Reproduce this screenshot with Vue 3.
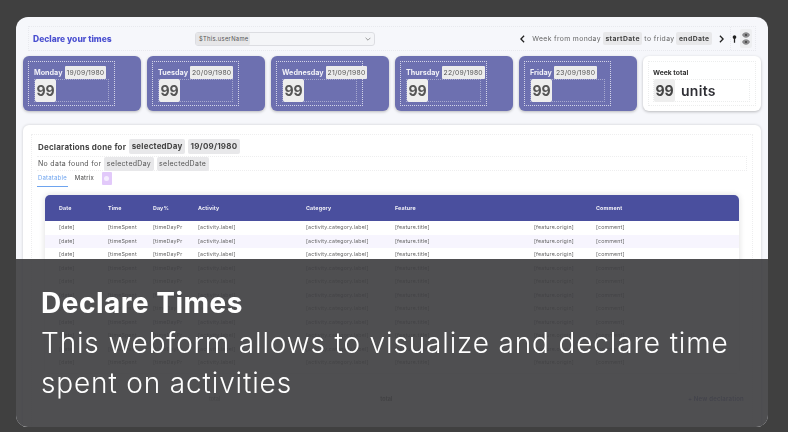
<template>
  <main class="stage">
    <section class="shot">
      <div class="page">
        <header class="top">
          <h1 class="top-title">Declare your times</h1>
          <div class="select">
            <span class="select-value">$This.userName</span>
            <svg class="select-arrow" viewBox="0 0 10 6"><path d="M1 1l4 4 4-4" /></svg>
          </div>
          <div class="week">
            <svg class="chev" viewBox="0 0 6 10"><path d="M5 1L1 5l4 4" /></svg>
            <span>Week from monday</span>
            <b class="pill">startDate</b>
            <span>to friday</span>
            <b class="pill">endDate</b>
            <svg class="chev" viewBox="0 0 6 10"><path d="M1 1l4 4-4 4" /></svg>
          </div>
          <div class="tools">
            <svg class="pin" viewBox="0 0 8 12"><path d="M4 0a3 3 0 0 1 1 5.8V12H3V5.800A3 3 0 0 1 4 0z" /></svg>
            <div class="eyes">
              <svg v-for="n in 2" :key="n" viewBox="0 0 12 8">
                <path d="M6 0C3.400 0 1.300 1.600 0 4c1.300 2.400 3.400 4 6 4s4.700-1.600 6-4C10.700 1.600 8.600 0 6 0z" />
                <circle cx="6" cy="4" r="1.500" />
              </svg>
            </div>
          </div>
        </header>

        <div class="cards">
          <article v-for="day in days" :key="day.name" class="card">
            <div class="card-box">
              <div class="card-head">
                <span class="day-name">{{ day.name }}</span>
                <span class="day-date">{{ day.date }}</span>
              </div>
              <div class="card-value"><span class="num">99</span></div>
            </div>
          </article>
          <article class="card total">
            <div class="card-box">
              <div class="total-label">Week total</div>
              <div class="card-value">
                <span class="num">99</span>
                <span class="units">units</span>
              </div>
            </div>
          </article>
        </div>

        <section class="panel">
          <div class="panel-box">
            <h2 class="decl">
              Declarations done for
              <span class="pill">selectedDay</span>
              <span class="pill">19/09/1980</span>
            </h2>
            <p class="none">
              No data found for
              <span class="pill">selectedDay</span>
              <span class="pill">selectedDate</span>
            </p>
            <div class="tabs">
              <span class="tab active">Datatable</span>
              <span class="tab">Matrix</span>
              <span class="tab-add"><i></i></span>
            </div>
            <div class="table">
              <div class="row head">
                <span v-for="c in columns" :key="c">{{ c }}</span>
              </div>
              <div v-for="n in 11" :key="n" class="row">
                <span v-for="c in cells" :key="c">{{ c }}</span>
              </div>
            </div>
            <div class="foot">
              <span class="foot-total">total</span>
              <span class="foot-total strong">total</span>
              <span class="foot-new">+ New declaration</span>
            </div>
          </div>
        </section>
      </div>

      <div class="caption">
        <h3>Declare Times</h3>
        <p>This webform allows to visualize and declare time spent on activities</p>
      </div>
    </section>
  </main>
</template>

<script setup>
const days = [
  { name: 'Monday', date: '19/09/1980' },
  { name: 'Tuesday', date: '20/09/1980' },
  { name: 'Wednesday', date: '21/09/1980' },
  { name: 'Thursday', date: '22/09/1980' },
  { name: 'Friday', date: '23/09/1980' }
]

const columns = ['Date', 'Time', 'Day%', 'Activity', 'Category', 'Feature', '', 'Comment']
const cells = [
  '[date]',
  '[timeSpent',
  '[timeDayPr',
  '[activity.label]',
  '[activity.category.label]',
  '[feature.title]',
  '[feature.origin]',
  '[comment]'
]
</script>

<style>
html,
body {
  margin: 0;
  background: #404040;
}
</style>

<style scoped>
.stage {
  width: 788px;
  height: 432px;
  padding: 17px 20px 5px 16px;
  box-sizing: border-box;
  background: #404040;
  font-family: Inter, "Liberation Sans", sans-serif;
  overflow: hidden;
}

.shot {
  position: relative;
  height: 410px;
  border-radius: 12px;
  overflow: hidden;
  background: #f6f7fb;
}

.page {
  padding: 9px 7px 0;
  color: #333;
  filter: blur(0.35px);
}

.top {
  position: relative;
  display: grid;
  grid-template-columns: 350px 1fr 25px;
  align-items: center;
  height: 25px;
  margin: 0 5px;
  border: 1px dotted #e8e9ee;
  box-sizing: border-box;
}

.top-title {
  margin: 0 0 0 4px;
  font-size: 8.500px;
  font-weight: 800;
  color: #4a4fd0;
  white-space: nowrap;
}

.select {
  position: absolute;
  left: 166px;
  top: 5px;
  width: 180px;
  height: 14px;
  display: flex;
  align-items: center;
  justify-content: space-between;
  box-sizing: border-box;
  border: 1px solid #dcdde2;
  border-radius: 3px;
  background: #f4f5f8;
}

.select-value {
  padding: 0 2px 0 3px;
  height: 12px;
  line-height: 12px;
  font-size: 5.800px;
  letter-spacing: 0.3px;
  background: #e6e6e8;
  border-radius: 2px;
  color: #555;
}

.select-arrow {
  width: 6px;
  height: 4px;
  margin-right: 3px;
  fill: none;
  stroke: #777;
  stroke-width: 1.200;
}

.week {
  grid-column: 2;
  display: flex;
  align-items: center;
  justify-content: flex-end;
  gap: 2px;
  font-size: 6.800px;
  letter-spacing: 0.38px;
  color: #666;
  white-space: nowrap;
  padding-right: 1px;
}

.chev {
  width: 5px;
  height: 8px;
  margin: 0 5px;
  fill: none;
  stroke: #222;
  stroke-width: 1.600;
}

.tools {
  grid-column: 3;
  display: flex;
  align-items: center;
  gap: 3px;
  height: 100%;
  border-left: 1px dotted #e8e9ee;
  padding-left: 1px;
}

.pin {
  width: 5px;
  height: 8px;
  fill: #222;
}

.eyes {
  display: flex;
  flex-direction: column;
  justify-content: center;
  align-items: center;
  gap: 1px;
  width: 12px;
  height: 19px;
  background: #eeeff1;
  border-radius: 2px;
}

.eyes svg {
  width: 8px;
  height: 6px;
  fill: #8a8a8c;
}

.eyes circle {
  fill: #3a3a3a;
}

.pill {
  display: inline-block;
  padding: 0 2.500px;
  background: #e8e8ea;
  border-radius: 2px;
}

.week .pill {
  line-height: 13px;
  color: #444;
  font-weight: 700;
}

.cards {
  display: grid;
  grid-template-columns: repeat(6, 1fr);
  gap: 6px;
  margin-top: 5px;
}

.card {
  height: 55px;
  padding: 5px;
  box-sizing: border-box;
  border-radius: 6px;
  background: #6d70b0;
  box-shadow: 0 1px 3px rgba(0, 0, 0, 0.25);
}

.card-box {
  width: 87px;
  height: 45px;
  padding: 4px 5px 0;
  box-sizing: border-box;
  border: 1px dotted rgba(255, 255, 255, 0.7);
}

.card-head {
  display: flex;
  align-items: center;
  gap: 2px;
  height: 13px;
  white-space: nowrap;
}

.day-name {
  font-size: 7.200px;
  font-weight: 700;
  color: #f2f2f8;
}

.day-date {
  padding: 0 2px;
  line-height: 13px;
  font-size: 6.800px;
  letter-spacing: 0.2px;
  color: #555;
  background: #ececec;
  border-radius: 1px;
}

.card-value {
  display: flex;
  align-items: center;
  height: 23px;
  width: 75px;
  border: 1px dotted rgba(255, 255, 255, 0.4);
  box-sizing: border-box;
}

.num {
  display: block;
  width: 21px;
  height: 23px;
  line-height: 23px;
  text-align: center;
  font-size: 14px;
  font-weight: 700;
  color: #555;
  background: #eeeeee;
  border-radius: 2px;
}

.total {
  background: #fff;
}

.total .card-box {
  width: 108px;
  padding-left: 4px;
  border-color: #eceded;
}

.total-label {
  height: 13px;
  line-height: 13px;
  font-size: 6.800px;
  font-weight: 700;
  color: #333;
}

.total .card-value {
  width: 97px;
  border-color: #eceded;
}

.total .num {
  color: #444;
  background: #eee;
}

.units {
  margin-left: 6px;
  font-size: 14px;
  font-weight: 600;
  letter-spacing: 0.3px;
  color: #2f2f35;
}

.panel {
  margin-top: 14px;
  padding: 9px 8px;
  height: 320px;
  box-sizing: border-box;
  border-radius: 6px;
  background: #fff;
  box-shadow: 0 0 3px rgba(0, 0, 0, 0.18);
}

.panel-box {
  height: 100%;
  box-sizing: border-box;
  border: 1px dotted #eeeeef;
  padding: 4px 5px 0;
}

.decl {
  display: flex;
  align-items: center;
  gap: 2px;
  height: 15px;
  margin: 0 0 0 1px;
  font-size: 8px;
  font-weight: 700;
  letter-spacing: 0.2px;
  color: #444;
}

.decl .pill {
  line-height: 15px;
  margin-left: 1px;
}

.none {
  display: flex;
  align-items: center;
  gap: 2px;
  height: 15px;
  margin: 2px 0 0;
  padding-left: 1px;
  box-sizing: border-box;
  border: 1px dotted #eeeeef;
  border-width: 1px 1px 1px 0;
  font-size: 7px;
  letter-spacing: 0.3px;
  color: #555;
}

.none .pill {
  line-height: 14px;
  margin-left: 1px;
}

.tabs {
  display: flex;
  align-items: flex-start;
  gap: 7px;
  height: 16px;
  margin-top: 1px;
  font-size: 6px;
  letter-spacing: 0.2px;
  color: #444;
}

.tab {
  height: 14px;
  line-height: 12px;
}

.tab.active {
  padding: 0 1px;
  color: #6ea4ef;
  border-bottom: 1px solid #6ea4ef;
}

.tab-add {
  display: flex;
  align-items: center;
  justify-content: center;
  width: 10px;
  height: 13px;
  margin-left: 1px;
  background: #e2c9fa;
  border-radius: 1px;
}

.tab-add i {
  width: 5px;
  height: 5px;
  border-radius: 50%;
  background: #f5eefe;
}

.table {
  margin: 7px 0 0 8px;
  width: 694px;
  padding-bottom: 3px;
  border-radius: 5px 5px 0 0;
  overflow: hidden;
  box-shadow: 0 0 6px rgba(0, 0, 0, 0.14);
  background: #fff;
}

.row {
  display: grid;
  grid-template-columns: 49px 45px 45px 108px 89px 139px 62px 1fr;
  padding-left: 14px;
  height: 13.500px;
  line-height: 13.500px;
  font-size: 5.300px;
  letter-spacing: 0.15px;
  color: #666;
  white-space: nowrap;
}

.row:nth-child(odd) {
  background: #f7f5fe;
}

.row.head {
  height: 26px;
  line-height: 26px;
  background: #4a4f9e;
  color: #f0f0f6;
  font-weight: 700;
}

.foot {
  position: relative;
  display: flex;
  align-items: center;
  height: 20px;
  margin-top: 16px;
  font-size: 5.500px;
  color: #888;
}

.foot-total {
  margin-left: 172px;
}

.foot-total.strong {
  margin-left: 160px;
  font-weight: 700;
  color: #555;
}

.foot-new {
  margin-left: auto;
  margin-right: 3px;
  font-size: 6px;
  letter-spacing: 0.2px;
  font-weight: 600;
  color: #5a5ea8;
}

.caption {
  position: absolute;
  left: 0;
  right: 0;
  bottom: 0;
  height: 168px;
  padding: 27px 25px 0;
  box-sizing: border-box;
  background: rgba(64, 64, 66, 0.92);
  color: #fff;
}

.caption h3 {
  margin: 0;
  font-size: 28px;
  line-height: 34px;
  font-weight: 700;
  letter-spacing: 0.5px;
}

.caption p {
  margin: 3px 0 0;
  font-size: 28px;
  line-height: 40px;
  font-weight: 350;
  letter-spacing: 0.85px;
}
</style>
